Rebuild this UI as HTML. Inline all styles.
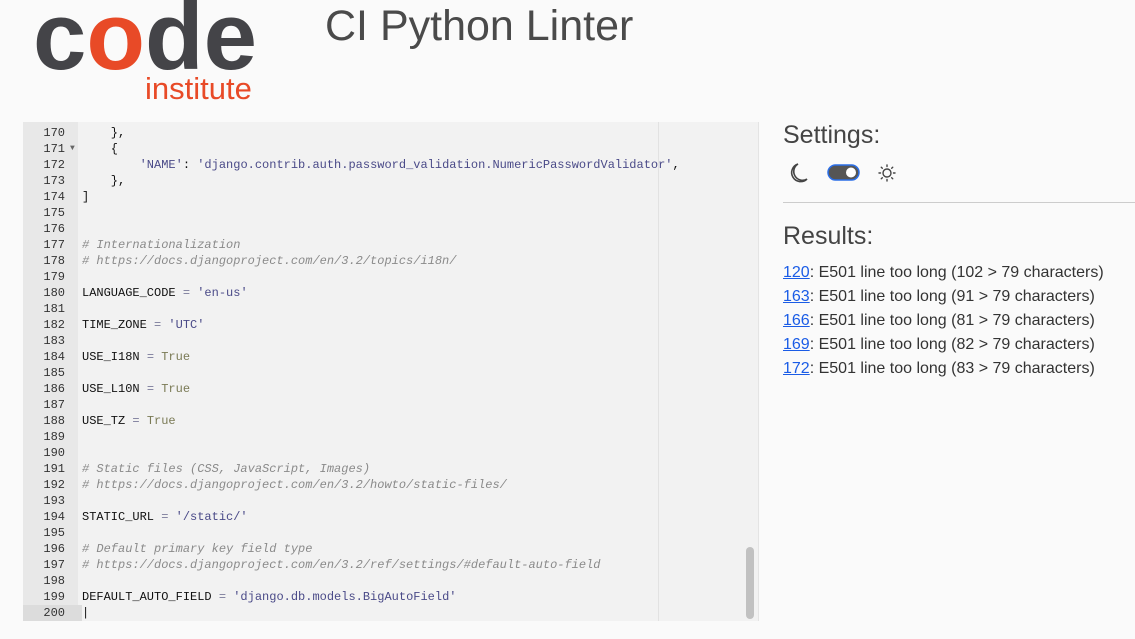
<!DOCTYPE html>
<html><head><meta charset="utf-8"><style>
body{margin:0;width:1135px;height:639px;background:#fafafa;font-family:"Liberation Sans",sans-serif;position:relative;overflow:hidden}
.logo{position:absolute;left:33px;top:-11px;font-size:96px;line-height:1;font-weight:bold;letter-spacing:0;color:#444448}
.logo .o{color:#e84a27}
.inst{position:absolute;left:145px;top:73px;font-size:31px;line-height:1;color:#e84a27}
.title{position:absolute;left:325px;top:5px;font-size:43px;line-height:1;color:#4a4a4a}
.ed{position:absolute;left:23px;top:122px;width:735px;height:499px;background:#f2f2f2;overflow:hidden;border-right:1px solid #e4e4e4}
.gut{position:absolute;left:0;top:0;width:55px;height:100%;background:#e8e8e8}
.pm{position:absolute;left:635px;top:0;width:1px;height:100%;background:#e2e2e2}
.sb{position:absolute;left:723px;top:425px;width:8px;height:72px;background:#c1c1c1;border-radius:4px}
.code{position:absolute;left:0;top:3px;font-family:"Liberation Mono",monospace;font-size:12px;line-height:16px;color:#111}
.l{height:16px;white-space:pre;position:relative}
.n{display:inline-block;width:42px;text-align:right;padding-right:17px;color:#333;position:relative}
.ar{position:absolute;left:47px;top:0;font-size:8px;color:#666}
.s{color:#4a4a88}.c{color:#8a8a8a;font-style:italic}.op{color:#7a7a9a}.k{color:#7a7a55}
h2{position:absolute;margin:0;font-weight:normal;font-size:25px;color:#444;left:783px}
.hr{position:absolute;left:783px;top:202px;width:352px;height:1px;background:#ccc}
.res{position:absolute;left:783px;top:261px;font-size:16px;line-height:24px;color:#333}
.res a{color:#1a5ce6;text-decoration:underline}
</style></head><body>
<div class="logo">c<span class="o">o</span>de</div>
<div class="inst">institute</div>
<div class="title">CI Python Linter</div>
<div class="ed"><div class="gut"></div><div class="pm"></div><div class="sb"></div>
<div class="code">
<div class="l"><span class="n">170</span>    },</div>
<div class="l"><span class="n">171<span class="ar">▼</span></span>    {</div>
<div class="l"><span class="n">172</span>        <span class="s">'NAME'</span>: <span class="s">'django.contrib.auth.password_validation.NumericPasswordValidator'</span>,</div>
<div class="l"><span class="n">173</span>    },</div>
<div class="l"><span class="n">174</span>]</div>
<div class="l"><span class="n">175</span></div>
<div class="l"><span class="n">176</span></div>
<div class="l"><span class="n">177</span><span class="c"># Internationalization</span></div>
<div class="l"><span class="n">178</span><span class="c"># https://docs.djangoproject.com/en/3.2/topics/i18n/</span></div>
<div class="l"><span class="n">179</span></div>
<div class="l"><span class="n">180</span>LANGUAGE_CODE <span class="op">=</span> <span class="s">'en-us'</span></div>
<div class="l"><span class="n">181</span></div>
<div class="l"><span class="n">182</span>TIME_ZONE <span class="op">=</span> <span class="s">'UTC'</span></div>
<div class="l"><span class="n">183</span></div>
<div class="l"><span class="n">184</span>USE_I18N <span class="op">=</span> <span class="k">True</span></div>
<div class="l"><span class="n">185</span></div>
<div class="l"><span class="n">186</span>USE_L10N <span class="op">=</span> <span class="k">True</span></div>
<div class="l"><span class="n">187</span></div>
<div class="l"><span class="n">188</span>USE_TZ <span class="op">=</span> <span class="k">True</span></div>
<div class="l"><span class="n">189</span></div>
<div class="l"><span class="n">190</span></div>
<div class="l"><span class="n">191</span><span class="c"># Static files (CSS, JavaScript, Images)</span></div>
<div class="l"><span class="n">192</span><span class="c"># https://docs.djangoproject.com/en/3.2/howto/static-files/</span></div>
<div class="l"><span class="n">193</span></div>
<div class="l"><span class="n">194</span>STATIC_URL <span class="op">=</span> <span class="s">'/static/'</span></div>
<div class="l"><span class="n">195</span></div>
<div class="l"><span class="n">196</span><span class="c"># Default primary key field type</span></div>
<div class="l"><span class="n">197</span><span class="c"># https://docs.djangoproject.com/en/3.2/ref/settings/#default-auto-field</span></div>
<div class="l"><span class="n">198</span></div>
<div class="l"><span class="n">199</span>DEFAULT_AUTO_FIELD <span class="op">=</span> <span class="s">'django.db.models.BigAutoField'</span></div>
<div class="l"><span class="n" style="background:#dcdcdc">200</span>|</div>
</div></div>
<h2 style="top:121px">Settings:</h2>
<svg style="position:absolute;left:785px;top:160px" width="120" height="26" viewBox="0 0 120 26">
<path d="M13 4 A9 9 0 1 0 22 19 A7.5 7.5 0 0 1 13 4 Z" fill="none" stroke="#444" stroke-width="1.6"/>
<rect x="43" y="5" width="31" height="15" rx="7.5" fill="#555" stroke="#2a6ee8" stroke-width="1.5"/>
<circle cx="66" cy="12.5" r="5" fill="#fff"/>
<circle cx="102" cy="13" r="4" fill="none" stroke="#444" stroke-width="1.4"/>
<g stroke="#444" stroke-width="1.4" stroke-linecap="round"><path d="M102 5v1.5M102 19.5v1.5M94 13h1.5M108.5 13h1.5M96.3 7.3l1 1M106.7 17.7l1 1M96.3 18.7l1-1M106.7 8.3l1-1"/></g>
</svg>
<div class="hr"></div>
<h2 style="top:222px">Results:</h2>
<div class="res">
<div><a>120</a>: E501 line too long (102 &gt; 79 characters)</div>
<div><a>163</a>: E501 line too long (91 &gt; 79 characters)</div>
<div><a>166</a>: E501 line too long (81 &gt; 79 characters)</div>
<div><a>169</a>: E501 line too long (82 &gt; 79 characters)</div>
<div><a>172</a>: E501 line too long (83 &gt; 79 characters)</div>
</div>
</body></html>
